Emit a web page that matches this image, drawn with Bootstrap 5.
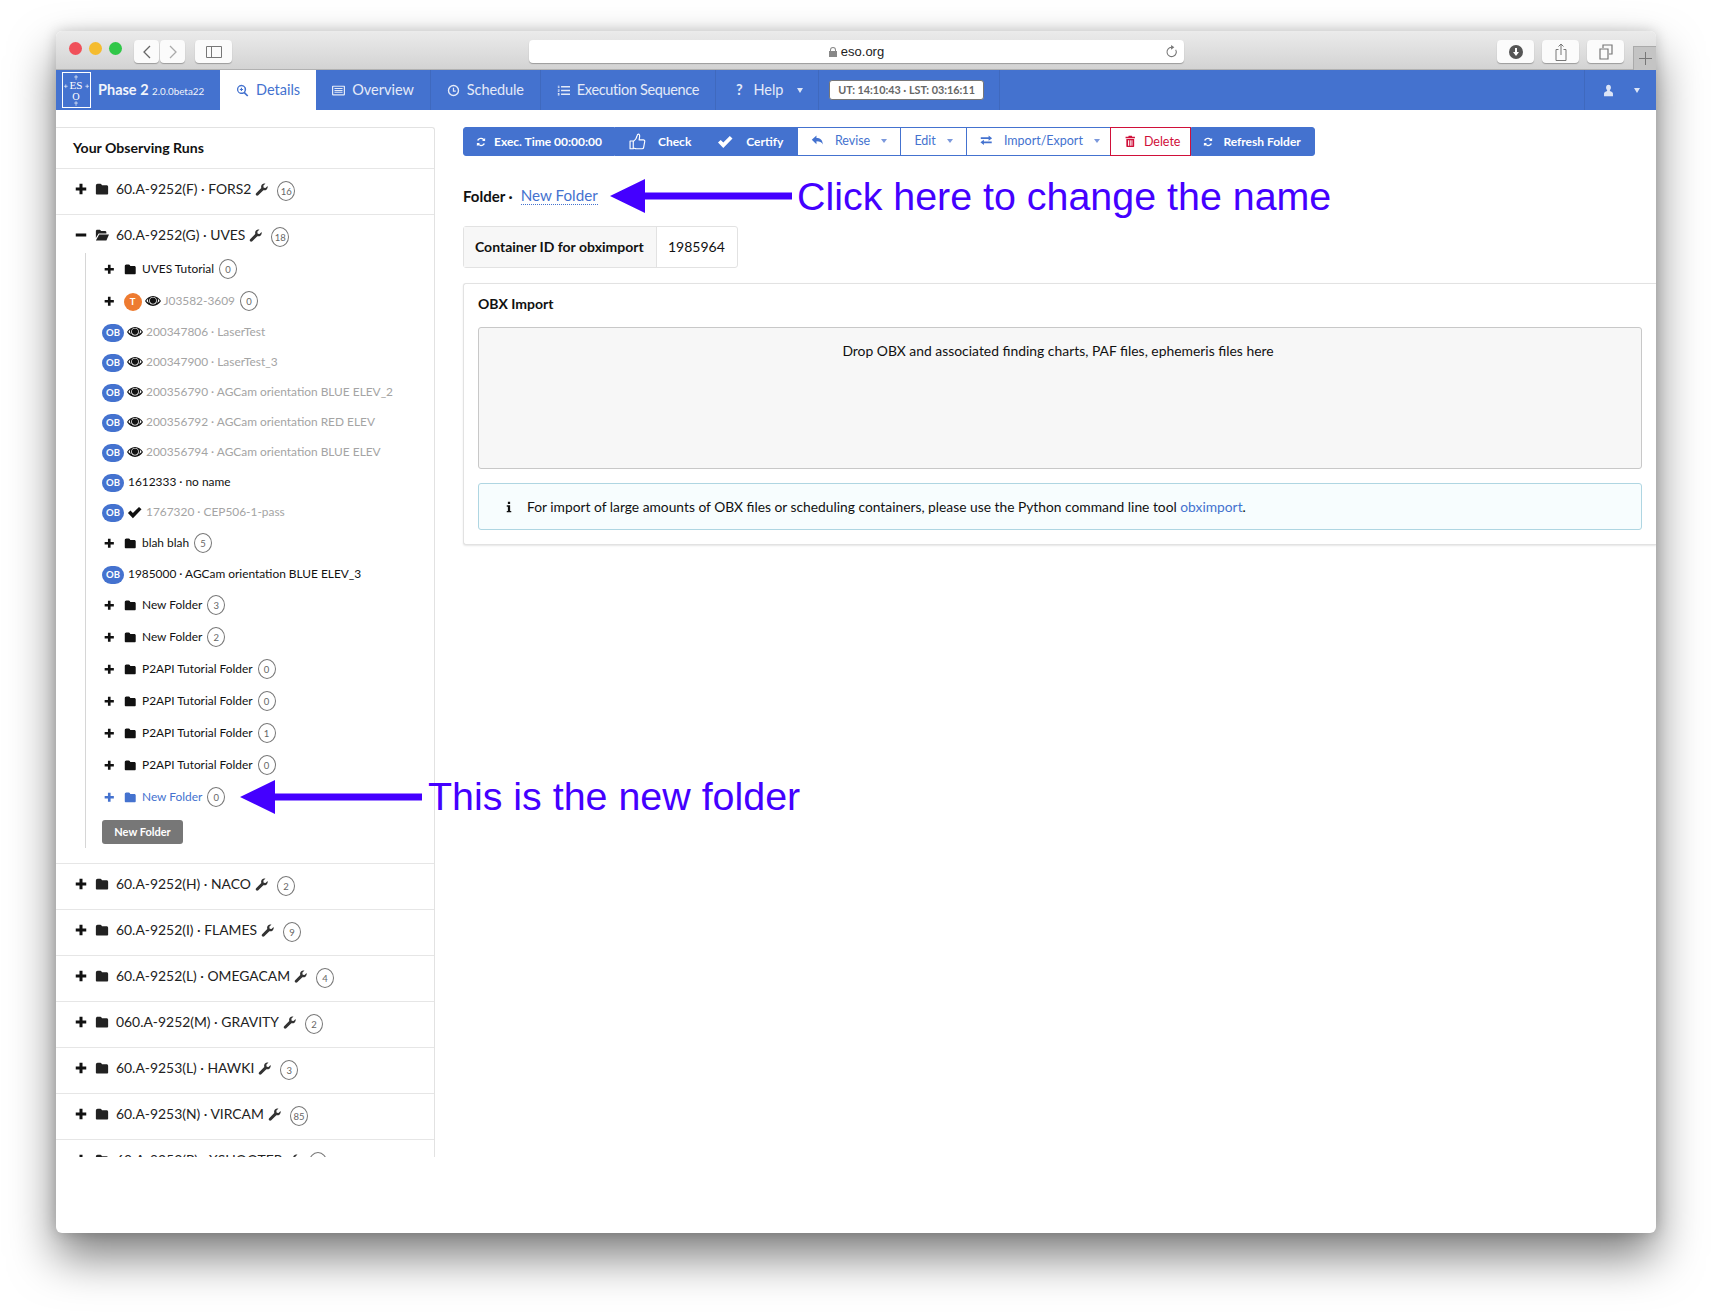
<!DOCTYPE html>
<html lang="en">
<head>
    <meta charset="UTF-8">
    <meta name="viewport" content="width=device-width, initial-scale=1.0">
    <title>Phase 2</title>
    <link href="https://cdn.jsdelivr.net/npm/bootstrap@5.3.0/dist/css/bootstrap.min.css" rel="stylesheet">
    <style>
        html, body { height: 100%; overflow: hidden; background: #fff; }
        body { font-family: Lato, "Liberation Sans", sans-serif; font-size: 13px; color: #111; }
        svg.ico { width: 1em; height: 1em; fill: currentColor; flex: none; }

        .mac-window { position: relative; margin: 31px 56px 0; height: 1202px; background: #fff; border-radius: 6px; box-shadow: 0 24px 46px rgba(0,0,0,.5), 0 0 14px rgba(0,0,0,.18); overflow: hidden; display: flex; flex-direction: column; }
        .mac-bar { height: 39px; flex: none; padding: 9px 0 0 13px; background: linear-gradient(#ebebeb, #d3d3d3); border-bottom: 1px solid #b1b1b1; }
        .mac-dots { gap: 7px; padding-top: 2px; }
        .mac-dot { width: 13px; height: 13px; border-radius: 50%; }
        .dot-red { background: #f0505a; }
        .dot-yellow { background: #f5bc2f; }
        .dot-green { background: #30c748; }
        .mac-nav { margin-left: 12px; gap: 1px; }
        .mac-btn { height: 23px; width: 37px; background: #fbfbfb; border-radius: 4px; box-shadow: 0 1px 1px rgba(0,0,0,.28); color: #666; }
        .mac-btn.half { width: 25px; }
        .mac-btn.side { margin-left: 10px; }
        .mac-url { width: 655px; height: 23px; margin-left: 297px; margin-right: 313px; background: #fff; border-radius: 4px; box-shadow: 0 1px 1px rgba(0,0,0,.28); font-family: "Liberation Sans", sans-serif; font-size: 13px; color: #222; position: relative; }
        .mac-reload { position: absolute; right: 6px; top: 5px; width: 13px; height: 13px; color: #777; }
        .mac-tools { gap: 8px; }
        .mac-plus { width: 23px; height: 24px; margin-top: 6px; margin-left: 9px; background: #c4c4c4; border: 1px solid #aaa; border-bottom: 0; border-right: 0; }

        .top-nav { height: 40px; flex: none; padding: 0; background: #4472cf; color: #fff; flex-wrap: nowrap; justify-content: flex-start; }
        .brand-box { width: 164px; flex: none; }
        .eso-logo { width: 29px; height: 36px; margin: 0 0 0 6px; border: 1px solid #fff; flex: none; }
        .top-brand { margin-left: 7px; font-weight: 700; font-size: 14.500px; color: #f1f4fb; white-space: nowrap; }
        .top-brand small { font-weight: 400; font-size: 9.800px; }
        .top-item { height: 40px; display: flex; align-items: center; gap: 7px; padding: 0 16px; color: #e4eaf8; font-size: 14.500px; border-right: 1px solid #3f69be; text-decoration: none; white-space: nowrap; }
        .top-item.current { background: #fff; color: #4472cf; border-right: 0; }
        .top-item.tight { letter-spacing: -.1px; }
        .top-item.slim { letter-spacing: -.35px; }
        .top-item.help { width: 103px; padding-left: 20px; }
        .top-item .ico { font-size: 13px; }
        .top-caret { display: inline-block; margin-left: 6px; border-top: 5px solid #dde5f6; border-left: 3.500px solid transparent; border-right: 3.500px solid transparent; }
        .clock-box { margin-left: 10px; padding: 0; height: 20px; line-height: 18px; width: 155px; background: #fff; border: 1px solid #777; border-radius: 3px; color: #666; font-weight: 700; font-size: 10.800px; white-space: nowrap; text-align: center; flex: none; }
        .nav-gap { width: 16px; height: 40px; border-right: 1px solid #3f69be; flex: none; }
        .user-box { margin-left: auto; width: 72px; height: 40px; border-left: 1px solid #3f69be; padding-left: 17px; display: flex; align-items: center; color: #dde5f6; }
        .user-box .top-caret { margin-left: 19px; }

        .page-body { flex: 1; min-height: 0; padding-top: 17px; display: flex; }
        .tree-card { width: 379px; height: 1030px; flex: none; overflow: hidden; border: 1px solid #e2e2e2; border-bottom: 0; border-left: 0; border-radius: 0 3px 0 0; box-shadow: none; }
        .tree-head { height: 41px; flex: none; padding: 0 17px; display: flex; align-items: center; font-weight: 700; font-size: 14.100px; border-bottom: 1px solid #e6e6e6; }
        .run-list { flex: none; }
        .run-row { min-height: 46px; border-bottom: 1px solid #e6e6e6; padding: 0 0 0 19px; font-size: 13.900px; color: #222; }
        .run-line { height: 40px; display: flex; align-items: center; }
        .run-line .ico-plus { font-size: 12px; margin-right: 8px; color: #111; }
        .run-line .ico-folder { font-size: 14px; margin-right: 7px; color: #222; }
        .run-line .ico-wrench { font-size: 13px; margin-left: 4px; color: #333; }
        .count-pill { display: inline-block; min-width: 18px; padding: 0 2px; height: 20px; line-height: 19px; margin-left: 5px; text-align: center; border: 1px solid #777; border-radius: 50%; font-size: 9.500px; color: #666; flex: none; background: #fff; }
        .run-line .count-pill { margin-left: 9px; margin-top: 3px; }
        .run-sub { margin-left: 10px; margin-top: -2px; padding: 0 0 4px 16px; border-left: 1px solid #d6d6d6; margin-bottom: 15px; font-size: 11.900px; color: #111; }
        .tree-line { display: flex; align-items: center; height: 30px; white-space: nowrap; }
        .tree-line.tall { height: 32px; }
        .tree-line .ico-plus { font-size: 10.500px; margin-left: 2px; margin-right: 9px; }
        .tree-line .ico-folder { font-size: 12.500px; margin-right: 6px; color: #111; }
        .tree-line .ico-eye { font-size: 16px; margin-left: 3px; margin-right: 3px; color: #111; }
        .tree-line .ico-check { font-size: 15px; margin-left: 3px; margin-right: 4px; color: #111; }
        .is-dim { color: #a4a4a4; }
        .is-new { color: #4472cf; }
        .tree-line.is-new .ico-folder { color: #4472cf; }
        .ob-pill { width: 22px; height: 18px; margin-top: 2px; margin-right: 0; border-radius: 9px; background: #4472cf; color: #fff; font-size: 9.500px; font-weight: 700; text-align: center; line-height: 18px; flex: none; }
        .t-pill { width: 18px; height: 18px; border-radius: 50%; margin-top: 2px; background: #ee7b30; color: #fff; font-size: 9.500px; font-weight: 700; text-align: center; line-height: 18px; flex: none; }
        .new-btn { display: block; width: 81px; height: 24px; margin-top: 7px; padding: 0; background: #777; border: 0; border-radius: 3px; color: #fff; font-size: 11px; font-weight: 700; line-height: 24px; }

        .main-pane { flex: 1; min-width: 0; padding-left: 28px; }
        .tool-bar { height: 29px; }
        .tool-bar .btn { height: 29px; padding: 0 13px; border-radius: 0; font-size: 12px; line-height: 27px; display: flex; align-items: center; gap: 7px; white-space: nowrap; flex: none; }
        .tool-bar .tool-fill { background: #4472cf; border: 1px solid #4472cf; color: #fff; font-weight: 700; }
        .tool-bar .tool-line { background: #fff; border: 1px solid #4472cf; color: #4472cf; margin-left: -1px; padding-bottom: 2px; gap: 11px; font-size: 12.500px; }
        .tool-bar .tool-red { background: #fff; border: 1px solid #d0103a; color: #d0103a; margin-left: -1px; z-index: 1; width: 81px; font-size: 12.500px; }
        .tool-bar .btn:first-child { border-radius: 3px 0 0 3px; }
        .tool-bar .btn:last-child { border-radius: 0 3px 3px 0; }
        .tool-bar .tb-exec { padding: 0 12px 0 11px; }
        .tool-bar .tb-check { padding: 0 12px 0 13px; gap: 12px; }
        .tool-bar .tb-certify { padding: 0 14px 0 12px; gap: 13px; }
        .tool-bar .tb-revise { width: 104px; }
        .tool-bar .tb-edit { width: 67px; }
        .tool-bar .tb-import { width: 145px; }
        .tool-bar .tb-refresh { padding: 0 13px 0 10px; gap: 9px; }
        .tool-bar .tb-thumb { font-size: 17px; }
        .tool-bar .tb-tick { font-size: 16px; }
        .tool-caret { display: inline-block; border-top: 4px solid #7b98dc; border-left: 3px solid transparent; border-right: 3px solid transparent; }
        .folder-title { height: 30px; margin-top: 25px; display: flex; align-items: center; font-size: 15px; font-weight: 700; }
        .folder-title a { margin-left: 8px; font-size: 15.200px; font-weight: 400; color: #4472cf; text-decoration: none; border-bottom: 1px dotted #4472cf; line-height: 17px; }
        .id-box { display: inline-flex; height: 42px; margin-top: 15px; border: 1px solid #e2e2e2; border-radius: 3px; font-size: 14px; }
        .id-key { width: 193px; padding: 0 0 2px 11px; background: #f7f7f7; border-right: 1px solid #e2e2e2; font-weight: 700; display: flex; align-items: center; white-space: nowrap; }
        .id-val { width: 80px; padding: 0 0 2px 11px; display: flex; align-items: center; }
        .obx-card { height: 262px; margin-top: 15px; padding: 0 14px; border: 1px solid #e2e2e2; border-right: 0; border-radius: 3px 0 0 3px; box-shadow: 0 1px 2px rgba(0,0,0,.1); }
        .obx-title { height: 43px; padding-top: 8px; font-size: 14px; font-weight: 700; line-height: 24px; }
        .drop-zone { height: 142px; padding: 14px 4px 0 0; background: #f7f7f7; border: 1px solid #c8c8c8; border-radius: 3px; text-align: center; font-size: 13.900px; line-height: 18px; }
        .info-box { height: 47px; margin: 14px 0 0; padding: 1px 0 0 24px; display: flex; align-items: center; gap: 12px; background: #f7fdfe; border: 1px solid #afd6e2; border-radius: 3px; font-size: 13.800px; color: #111; }
        .info-box .ico { font-size: 12px; }
        .info-box a { color: #4472cf; text-decoration: none; }

        .note-arrow { position: absolute; fill: #4400ff; }
        .note-text { position: absolute; color: #4400ff; font-family: "Liberation Sans", sans-serif; font-size: 39.400px; line-height: 46px; white-space: nowrap; }
        .note-one { left: 554px; top: 148px; }
        .note-one-text { left: 741px; top: 142px; }
        .note-two { left: 184px; top: 749px; }
        .note-two-text { left: 372px; top: 742px; }
    </style>
</head>
<body>
    <svg width="0" height="0" class="position-absolute">
        <symbol id="i-plus" viewBox="0 0 16 16"><path d="M6 1h4v5h5v4h-5v5H6v-5H1V6h5z"/></symbol>
        <symbol id="i-minus" viewBox="0 0 16 16"><path d="M1 6h14v4H1z"/></symbol>
        <symbol id="i-folder" viewBox="0 0 16 16"><path d="M1 4.200C1 3 1.800 2 3 2h3c.8 0 1.300.4 1.600 1l.4.700h5.200c1 0 1.800.8 1.800 1.800V13c0 .8-.6 1.300-1.300 1.300H2.300C1.600 14.300 1 13.800 1 13z"/></symbol>
        <symbol id="i-folder-open" viewBox="0 0 16 16"><path d="M1 3.500C1 2.700 1.700 2 2.500 2h3.200l1.300 1.500h4.500c.8 0 1.500.7 1.500 1.500v1.300H4.200L1 11.500zM4.800 7.500H16l-3 6.800H1z"/></symbol>
        <symbol id="i-wrench" viewBox="0 0 16 16"><path d="M15.500 3.800c.4 1.700-.1 3.400-1.400 4.400-1.100.9-2.500 1-3.800.6l-6.300 6.300c-.7.7-1.900.7-2.600 0s-.7-1.900 0-2.600l6.300-6.400C7.300 4.400 7.600 2.900 8.600 1.800 9.700.6 11.400.2 12.900.7L10.200 3.400l.5 2.300 2.200.6z"/></symbol>
        <symbol id="i-eye" viewBox="0 0 16 16"><path fill-rule="evenodd" d="M8 3C4.500 3 1.700 5.300 0 8c1.700 2.700 4.500 5 8 5s6.300-2.300 8-5c-1.700-2.700-4.500-5-8-5zM3.300 5.600C3 6.300 2.900 7 3 7.800c.1.900.4 1.700.9 2.300C2.900 9.500 2 8.800 1.300 8c.5-.9 1.200-1.700 2-2.400zm9.400 0c.8.700 1.500 1.500 2 2.400-.7.800-1.600 1.500-2.600 2.100.5-.6.8-1.400.9-2.300.1-.8 0-1.500-.3-2.200z"/><circle cx="8" cy="7.800" r="3.800" fill="#fff"/><circle cx="8" cy="7.600" r="3.100"/></symbol>
        <symbol id="i-check" viewBox="0 0 16 16"><path d="M1 8.500l2.700-2.600 2.600 2.700L12.800 2 15.500 4.600 6.300 14z"/></symbol>
        <symbol id="i-zoom" viewBox="0 0 16 16"><path fill-rule="evenodd" d="M6.700 1a5.700 5.700 0 0 1 4.600 9.100l3.900 3.900-1.500 1.500-3.900-3.900A5.700 5.700 0 1 1 6.700 1zm0 1.800a3.900 3.900 0 1 0 0 7.800 3.900 3.900 0 0 0 0-7.800zM6 4.700h1.400V6h1.300v1.400H7.400v1.300H6V7.400H4.700V6H6z"/></symbol>
        <symbol id="i-list-alt" viewBox="0 0 16 16"><path fill-rule="evenodd" d="M1 2h14c.6 0 1 .4 1 1v10c0 .6-.4 1-1 1H1c-.6 0-1-.4-1-1V3c0-.6.4-1 1-1zm.5 1.500v9h13v-9zM3 5h10v1.200H3zm0 2.300h10v1.200H3zm0 2.300h10v1.200H3z"/></symbol>
        <symbol id="i-time" viewBox="0 0 16 16"><path fill-rule="evenodd" d="M8 1a7 7 0 1 1 0 14A7 7 0 0 1 8 1zm0 1.700a5.300 5.300 0 1 0 0 10.600A5.300 5.300 0 0 0 8 2.700zM7.200 4.500h1.500v3.400h2.100v1.500H7.200z"/></symbol>
        <symbol id="i-list" viewBox="0 0 16 16"><path d="M5 2.500h11v1.800H5zm0 4.600h11v1.800H5zm0 4.600h11v1.800H5zM1 2h2v1H1.800v.5H3V5H1V4h1.200v-.5H1zm0 4.600h2v2.900H1v-1h1.200V8H1v-.5h1.200V7H1zm0 4.600h2v3H1v-1h1.200v-.4H1v-.8h1.200V12H1z"/></symbol>
        <symbol id="i-user" viewBox="0 0 16 16"><path d="M8 1c1.900 0 3 1.500 3 3.400 0 1.300-.5 2.500-1.300 3.200v1c1.900.7 3.800 1.500 3.800 3.200V15H2.500v-3.200c0-1.700 1.900-2.500 3.800-3.200v-1C5.500 6.900 5 5.700 5 4.400 5 2.500 6.100 1 8 1z"/></symbol>
        <symbol id="i-thumb" viewBox="0 0 16 16"><path fill="none" stroke="currentColor" stroke-width="1.100" stroke-linejoin="round" d="M1 7.500h3v7.300H1zM4 8c1.500-1 3.200-3 3.500-5 .1-1 .4-2 1.300-2 1 0 1.400 1.200 1.200 2.500L9.500 6.500h4c.9 0 1.500.7 1.300 1.500l-1 5.500c-.1.800-.8 1.300-1.500 1.300H7c-1.200 0-2-.5-3-.8"/></symbol>
        <symbol id="i-refresh" viewBox="0 0 16 16"><path d="M13.500 2.500v4.300H9.200l1.600-1.600C10 4.500 9 4.100 8 4.100c-1.500 0-2.800.9-3.400 2.200L2.700 5.600C3.700 3.600 5.700 2.300 8 2.300c1.500 0 3 .6 4.100 1.600zM2.500 13.500V9.200h4.300l-1.600 1.600c.8.700 1.800 1.100 2.800 1.100 1.500 0 2.800-.9 3.400-2.200l1.900.7c-1 2-3 3.300-5.300 3.300-1.500 0-3-.6-4.100-1.600z"/></symbol>
        <symbol id="i-reply" viewBox="0 0 16 16"><path d="M7 2v3.200c4.500 0 8 2.200 8 8.300-1.200-3.100-3.700-4.300-8-4.300V13L1 7.500z"/></symbol>
        <symbol id="i-transfer" viewBox="0 0 16 16"><path d="M1 4.300h10V2l4.500 3.300L11 8.500V6.300H1zM15 9.700H5V7.500L.5 10.700 5 14v-2.300h10z"/></symbol>
        <symbol id="i-trash" viewBox="0 0 16 16"><path d="M6 .8h4l.5 1.500H14v1.700H2V2.300h3.500zM3 5h10v9.500c0 .4-.4.8-.8.8H3.800c-.4 0-.8-.4-.8-.8zm2.200 1.700v7h1.200v-7zm2.200 0v7h1.200v-7zm2.200 0v7h1.200v-7z"/></symbol>
        <symbol id="i-info" viewBox="0 0 16 16"><path d="M6.500 1h3v3h-3zM5 5.800h4.500v7.400H11V15H5v-1.800h1.500V7.600H5z"/></symbol>
    </svg>

    <div class="mac-window">
        <div class="mac-bar d-flex">
            <div class="mac-dots d-flex align-items-start">
                <span class="mac-dot dot-red"></span>
                <span class="mac-dot dot-yellow"></span>
                <span class="mac-dot dot-green"></span>
            </div>
            <div class="mac-nav d-flex">
                <div class="mac-btn half d-flex align-items-center justify-content-center"><svg width="8" height="14" viewBox="0 0 8 14"><path d="M7 1L1 7l6 6" fill="none" stroke="#666" stroke-width="1.300"/></svg></div>
                <div class="mac-btn half d-flex align-items-center justify-content-center"><svg width="8" height="14" viewBox="0 0 8 14"><path d="M1 1l6 6-6 6" fill="none" stroke="#aaa" stroke-width="1.300"/></svg></div>
            </div>
            <div class="mac-btn side d-flex align-items-center justify-content-center"><svg width="16" height="12" viewBox="0 0 16 12"><path d="M.5.500h15v11H.5zM5.500.500v11" fill="none" stroke="#777"/></svg></div>
            <div class="mac-url d-flex align-items-center justify-content-center gap-1">
                <svg width="8" height="10" viewBox="0 0 8 10"><path d="M1 4V3a3 3 0 0 1 6 0v1h1v6H0V4zm1 0h4V3a2 2 0 0 0-4 0z" fill="#888"/></svg>
                eso.org
                <svg class="mac-reload" viewBox="0 0 14 14"><path d="M11.500 5A5 5 0 1 1 7 2.500" fill="none" stroke="currentColor" stroke-width="1.100"/><path d="M6.500 0l3.500 2.500-3.500 2.500z" fill="currentColor"/></svg>
            </div>
            <div class="mac-tools d-flex">
                <div class="mac-btn d-flex align-items-center justify-content-center"><svg width="14" height="14" viewBox="0 0 14 14"><circle cx="7" cy="7" r="7" fill="#555"/><path d="M6 3h2v4h2L7 11 4 7h2z" fill="#fff"/></svg></div>
                <div class="mac-btn d-flex align-items-center justify-content-center"><svg width="12" height="18" viewBox="0 0 12 18"><path d="M3.500 6.500H1v11h10v-11H8.500M6 12V1M3.500 3.500L6 1l2.500 2.500" fill="none" stroke="#777"/></svg></div>
                <div class="mac-btn d-flex align-items-center justify-content-center"><svg width="14" height="16" viewBox="0 0 14 16"><path d="M4 4V1h9v9h-3M1 5h8v10H1z" fill="none" stroke="#777" stroke-width="1.200"/></svg></div>
            </div>
            <div class="mac-plus d-flex align-items-center justify-content-center"><svg width="13" height="13" viewBox="0 0 13 13"><path d="M6.500 0v13M0 6.500h13" stroke="#777"/></svg></div>
        </div>

        <nav class="navbar top-nav">
            <div class="brand-box d-flex align-items-center">
                <svg class="eso-logo" viewBox="0 0 29 36">
                    <path d="M14 2v5M12 4h4M14 30v5M12 32h4M1 14h4M3 12v4M24 14h4M26 12v4" stroke="#fff" stroke-width=".7"/>
                    <text x="14" y="17" text-anchor="middle" fill="#fff" font-size="12" font-family="Liberation Serif, serif">ES</text>
                    <text x="14" y="29" text-anchor="middle" fill="#fff" font-size="11" font-family="Liberation Serif, serif">O</text>
                </svg>
                <span class="top-brand">Phase 2 <small>2.0.0beta22</small></span>
            </div>
            <a class="top-item current" href="#"><svg class="ico"><use href="#i-zoom"/></svg>Details</a>
            <a class="top-item" href="#"><svg class="ico"><use href="#i-list-alt"/></svg>Overview</a>
            <a class="top-item tight" href="#"><svg class="ico"><use href="#i-time"/></svg>Schedule</a>
            <a class="top-item slim" href="#"><svg class="ico"><use href="#i-list"/></svg>Execution Sequence</a>
            <a class="top-item help" href="#"><b>?</b>&nbsp;Help <span class="top-caret"></span></a>
            <div class="clock-box">UT: 14:10:43 · LST: 03:16:11</div>
            <div class="nav-gap"></div>
            <div class="user-box"><svg class="ico"><use href="#i-user"/></svg><span class="top-caret"></span></div>
        </nav>

        <div class="page-body">
            <div class="card tree-card">
                <div class="tree-head">Your Observing Runs</div>
                <div class="run-list" id="runList"></div>
            </div>

            <div class="main-pane">
                <div class="tool-bar d-flex">
                    <button class="btn tool-fill tb-exec"><svg class="ico"><use href="#i-refresh"/></svg>Exec. Time 00:00:00</button>
                    <button class="btn tool-fill tb-check"><svg class="ico tb-thumb"><use href="#i-thumb"/></svg>Check</button>
                    <button class="btn tool-fill tb-certify"><svg class="ico tb-tick"><use href="#i-check"/></svg>Certify</button>
                    <button class="btn tool-line tb-revise"><svg class="ico"><use href="#i-reply"/></svg>Revise<span class="tool-caret"></span></button>
                    <button class="btn tool-line tb-edit">Edit<span class="tool-caret"></span></button>
                    <button class="btn tool-line tb-import"><svg class="ico"><use href="#i-transfer"/></svg>Import/Export<span class="tool-caret"></span></button>
                    <button class="btn tool-red"><svg class="ico"><use href="#i-trash"/></svg>Delete</button>
                    <button class="btn tool-fill tb-refresh"><svg class="ico"><use href="#i-refresh"/></svg>Refresh Folder</button>
                </div>

                <div class="folder-title">Folder · <a href="#">New Folder</a></div>

                <div class="id-box">
                    <div class="id-key">Container ID for obximport</div>
                    <div class="id-val">1985964</div>
                </div>

                <div class="card obx-card">
                    <div class="obx-title">OBX Import</div>
                    <div class="drop-zone">Drop OBX and associated finding charts, PAF files, ephemeris files here</div>
                    <div class="alert info-box" role="alert">
                        <svg class="ico"><use href="#i-info"/></svg>
                        <span>For import of large amounts of OBX files or scheduling containers, please use the Python command line tool <a href="#">obximport</a>.</span>
                    </div>
                </div>
            </div>
        </div>

        <!-- annotations drawn on top of the screenshot -->
        <svg class="note-arrow note-one" width="182" height="34" viewBox="0 0 182 34"><path d="M0 17L35 0v13.500h147v7H35V34z"/></svg>
        <div class="note-text note-one-text">Click here to change the name</div>
        <svg class="note-arrow note-two" width="182" height="34" viewBox="0 0 182 34"><path d="M0 17L35 0v13.500h147v7H35V34z"/></svg>
        <div class="note-text note-two-text">This is the new folder</div>
    </div>

    <script src="https://cdn.jsdelivr.net/npm/bootstrap@5.3.0/dist/js/bootstrap.bundle.min.js"></script>
    <script>
        const icon = (name, cls) => `<svg class="ico ${cls}"><use href="#i-${name}"/></svg>`;

        const runs = [
            { name: '60.A-9252(F) · FORS2', count: 16 },
            { name: '60.A-9252(G) · UVES', count: 18, open: true },
            { name: '60.A-9252(H) · NACO', count: 2 },
            { name: '60.A-9252(I) · FLAMES', count: 9 },
            { name: '60.A-9252(L) · OMEGACAM', count: 4 },
            { name: '060.A-9252(M) · GRAVITY', count: 2 },
            { name: '60.A-9253(L) · HAWKI', count: 3 },
            { name: '60.A-9253(N) · VIRCAM', count: 85 },
            { name: '60.A-9253(P) · XSHOOTER', count: 1 },
        ];

        const items = [
            { type: 'folder', name: 'UVES Tutorial', count: 0 },
            { type: 'target', name: 'J03582-3609', count: 0 },
            { type: 'ob', mark: 'eye', name: '200347806 · LaserTest' },
            { type: 'ob', mark: 'eye', name: '200347900 · LaserTest_3' },
            { type: 'ob', mark: 'eye', name: '200356790 · AGCam orientation BLUE ELEV_2' },
            { type: 'ob', mark: 'eye', name: '200356792 · AGCam orientation RED ELEV' },
            { type: 'ob', mark: 'eye', name: '200356794 · AGCam orientation BLUE ELEV' },
            { type: 'ob', name: '1612333 · no name' },
            { type: 'ob', mark: 'check', name: '1767320 · CEP506-1-pass' },
            { type: 'folder', name: 'blah blah', count: 5 },
            { type: 'ob', name: '1985000 · AGCam orientation BLUE ELEV_3' },
            { type: 'folder', name: 'New Folder', count: 3 },
            { type: 'folder', name: 'New Folder', count: 2 },
            { type: 'folder', name: 'P2API Tutorial Folder', count: 0 },
            { type: 'folder', name: 'P2API Tutorial Folder', count: 0 },
            { type: 'folder', name: 'P2API Tutorial Folder', count: 1 },
            { type: 'folder', name: 'P2API Tutorial Folder', count: 0 },
            { type: 'folder', name: 'New Folder', count: 0, isNew: true },
        ];

        function itemHtml(item) {
            const pill = item.count !== undefined ? `<span class="count-pill">${item.count}</span>` : '';
            if (item.type === 'folder') {
                return `<div class="tree-line tall${item.isNew ? ' is-new' : ''}">${icon('plus', 'ico-plus')}${icon('folder', 'ico-folder')}<span>${item.name}</span>${pill}</div>`;
            }
            if (item.type === 'target') {
                return `<div class="tree-line tall">${icon('plus', 'ico-plus')}<span class="t-pill">T</span>${icon('eye', 'ico-eye')}<span class="is-dim">${item.name}</span>${pill}</div>`;
            }
            const mark = item.mark ? icon(item.mark, 'ico-' + item.mark) : '<span class="me-1"></span>';
            return `<div class="tree-line"><span class="ob-pill">OB</span>${mark}<span class="${item.mark ? 'is-dim' : ''}">${item.name}</span></div>`;
        }

        document.getElementById('runList').innerHTML = runs.map(run => `
            <div class="run-row">
                <div class="run-line">
                    ${icon(run.open ? 'minus' : 'plus', 'ico-plus')}${icon(run.open ? 'folder-open' : 'folder', 'ico-folder')}
                    <span>${run.name}</span>${icon('wrench', 'ico-wrench')}<span class="count-pill">${run.count}</span>
                </div>
                ${run.open ? `<div class="run-sub">${items.map(itemHtml).join('')}<button class="btn new-btn">New Folder</button></div>` : ''}
            </div>`).join('');
    </script>
</body>
</html>
